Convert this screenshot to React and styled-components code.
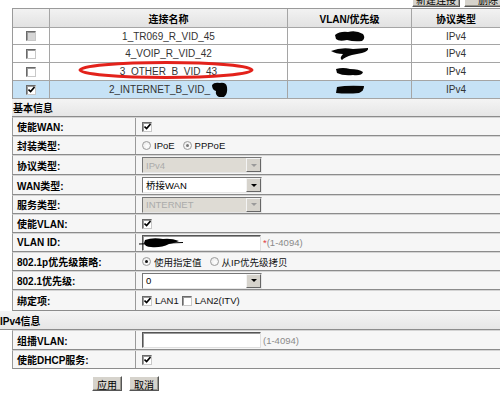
import styled, { createGlobalStyle } from "styled-components";

const GlobalStyle = createGlobalStyle`
  html, body { margin: 0; padding: 0; background: #fff; }
  body {
    font-family: "Liberation Sans", "Noto Sans CJK SC", sans-serif;
    font-size: 10px;
    color: #111;
  }
`;

const Page = styled.div`
  width: 500px;
  height: 396px;
  overflow: hidden;
  position: relative;
`;

const TopBar = styled.div`
  display: flex;
  justify-content: flex-end;
  gap: 4px;
  margin: -9px -12px 1px 0;
  height: 16px;
`;

const WinButton = styled.button`
  box-sizing: border-box;
  width: ${(p) => p.$w || 30}px;
  height: ${(p) => p.$h || 15}px;
  padding: 0;
  font-family: inherit;
  font-size: 10px;
  color: #000;
  background: #d6d3cc;
  border: 1px solid;
  border-color: #fff #555 #555 #fff;
  box-shadow: inset -1px -1px 0 #9a9890;
`;

const ConnTable = styled.div`
  margin-left: 12px;
  width: 489px;
  display: grid;
  grid-template-columns: 37px 238px 124px 1fr;
  grid-template-rows: 19px 17px 18px 18px 18px;
  border-top: 1px solid #9a9a9a;
  border-left: 1px solid #9a9a9a;
  box-sizing: border-box;
`;

const Cell = styled.div`
  display: flex;
  align-items: center;
  justify-content: center;
  gap: 1px;
  border-right: 1px solid #a5a5a5;
  border-bottom: 1px solid #a5a5a5;
  background: ${(p) => (p.$head ? "linear-gradient(#f2f2f2, #e2e2e2)" : p.$sel ? "#c6e2f6" : "#fff")};
  font-weight: ${(p) => (p.$head ? "bold" : "normal")};
  color: ${(p) => (p.$head ? "#000" : "#333")};
  overflow: hidden;
  white-space: nowrap;
`;

const Form = styled.div`
  margin-left: 12px;
  width: 489px;
`;

const Section = styled.div`
  height: ${(p) => p.$h}px;
  box-sizing: border-box;
  display: flex;
  align-items: center;
  margin-left: ${(p) => (p.$outdent ? -12 : 0)}px;
  padding-left: ${(p) => (p.$outdent ? 0 : 1)}px;
  font-weight: bold;
  color: #000;
  background: linear-gradient(#f4f4f4, #e6e6e6);
  border-bottom: 1px solid #8c8c8c;
`;

const Row = styled.div`
  height: ${(p) => p.$h}px;
  box-sizing: border-box;
  display: grid;
  grid-template-columns: 123px 1fr;
  background: #f6f6f6;
  border-left: 1px solid #9a9a9a;
  border-top: 1px solid #d4d4d4;
  border-bottom: 1px solid #8c8c8c;
`;

const Label = styled.div`
  display: flex;
  align-items: center;
  padding-left: 4px;
  font-weight: bold;
  color: #000;
  border-right: 1px solid #9a9a9a;
  white-space: nowrap;
`;

const Value = styled.div`
  display: flex;
  align-items: center;
  gap: 3px;
  padding-left: 6px;
  font-size: 9.5px;
  color: #111;
  white-space: nowrap;
`;

const Box = styled.span`
  box-sizing: border-box;
  width: 10px;
  height: 10px;
  display: inline-flex;
  align-items: center;
  justify-content: center;
  background: ${(p) => (p.$disabled ? "#d6d6d6" : "#fff")};
  border: 1px solid;
  border-color: #6a6a6a #c8c8c8 #c8c8c8 #6a6a6a;
  box-shadow: inset 1px 1px 0 #9a9a9a;
`;

const Check = ({ on, disabled }) => (
  <Box $disabled={disabled}>
    {on && (
      <svg width="7" height="7" viewBox="0 0 7 7">
        <path d="M0.5 3.5 L2.6 5.6 L6.5 1" stroke="#000" strokeWidth="1.6" fill="none" />
      </svg>
    )}
  </Box>
);

const RadioDot = styled.span`
  box-sizing: border-box;
  width: 9px;
  height: 9px;
  border-radius: 50%;
  display: inline-flex;
  align-items: center;
  justify-content: center;
  background: radial-gradient(circle at 60% 60%, #fff, #e4e4e4);
  border: 1px solid #9c9c9c;
  margin-left: ${(p) => (p.$gap ? 5 : 0)}px;
  &::after {
    content: "";
    width: 3px;
    height: 3px;
    border-radius: 50%;
    background: ${(p) => (p.$on ? (p.$dim ? "#777" : "#111") : "transparent")};
  }
`;

const SelectBox = styled.div`
  box-sizing: border-box;
  width: 120px;
  height: 16px;
  display: flex;
  align-items: center;
  justify-content: space-between;
  padding-left: 3px;
  border: 1px solid;
  border-color: #777 #e6e6e6 #e6e6e6 #777;
  background: ${(p) => (p.$disabled ? "#dedbd4" : "#fff")};
  color: ${(p) => (p.$disabled ? "#ababab" : "#000")};
  font-size: 9.5px;
`;

const Arrow = styled.span`
  box-sizing: border-box;
  width: 15px;
  height: 14px;
  display: flex;
  align-items: center;
  justify-content: center;
  background: #d6d3cc;
  border: 1px solid;
  border-color: #f4f4f4 #666 #666 #f4f4f4;
  &::after {
    content: "";
    border-left: 3px solid transparent;
    border-right: 3px solid transparent;
    border-top: 3px solid ${(p) => (p.$disabled ? "#9a9a9a" : "#000")};
  }
`;

const Select = ({ value, disabled }) => (
  <SelectBox $disabled={disabled}>
    {value}
    <Arrow $disabled={disabled} />
  </SelectBox>
);

const InputBox = styled.div`
  position: relative;
  box-sizing: border-box;
  width: 119px;
  height: 16px;
  background: #fff;
  border: 1px solid;
  border-color: #555 #e0e0e0 #e0e0e0 #555;
  box-shadow: inset 1px 1px 0 #999;
`;

const Hint = styled.span`
  color: #8a8a8a;
  font-size: 9.5px;
  margin-left: -1px;
  b {
    color: #e04040;
    font-weight: normal;
  }
`;

const Blot = styled.svg`
  position: absolute;
  left: -4px;
  top: 1px;
`;

const Ellipse = styled.svg`
  position: absolute;
  left: 77px;
  top: 59px;
`;

const Actions = styled.div`
  display: flex;
  gap: 7px;
  padding-left: 92px;
  margin-top: 7px;
`;

const Ink = ({ w, h, d }) => (
  <svg width={w} height={h} viewBox={`0 0 ${w} ${h}`}>
    <path d={d} fill="#050505" />
  </svg>
);

const conns = [
  { name: "1_TR069_R_VID_45", disabled: true, ink: { w: 32, h: 12, d: "M1 5 Q6 1 14 2 Q22 0 29 4 Q32 8 28 11 Q20 12 13 10 Q5 12 2 9 Z" } },
  { name: "4_VOIP_R_VID_42", ink: { w: 38, h: 13, d: "M0 4 Q10 0 22 2 L37 1 Q38 4 31 6 L21 8 Q14 10 11 13 Q8 11 12 7 Q5 7 0 4 Z" } },
  { name: "3_OTHER_B_VID_43", ink: { w: 29, h: 9, d: "M1 2 Q8 0 15 2 Q24 2 28 5 Q27 9 18 8 Q8 9 2 6 Z" } },
  { name: "2_INTERNET_B_VID_", sel: true, on: true, ink: { w: 30, h: 9, d: "M2 2 Q12 0 29 1 Q29 6 24 8 Q12 9 1 8 Z" } },
];

const rows = [
  { label: "使能WAN:", h: 19, v: <Check on /> },
  {
    label: "封装类型:",
    h: 19,
    v: (
      <>
        <RadioDot /> IPoE <RadioDot $on $dim $gap /> PPPoE
      </>
    ),
  },
  { label: "协议类型:", h: 20, v: <Select value="IPv4" disabled /> },
  { label: "WAN类型:", h: 20, v: <Select value="桥接WAN" /> },
  { label: "服务类型:", h: 19, v: <Select value="INTERNET" disabled /> },
  { label: "使能VLAN:", h: 19, v: <Check on /> },
  {
    label: "VLAN ID:",
    h: 19,
    v: (
      <>
        <InputBox>
          <Blot width="46" height="12" viewBox="0 0 46 12">
            <path d="M0 7 L44 5.5" stroke="#000" strokeWidth="1" />
            <path d="M6 3 Q14 0 24 2 Q32 1 40 4 Q36 6 30 7 Q22 11 12 10 Q6 10 5 6 Z" fill="#000" />
          </Blot>
        </InputBox>
        <Hint>
          <b>*</b>(1-4094)
        </Hint>
      </>
    ),
  },
  {
    label: "802.1p优先级策略:",
    h: 19,
    v: (
      <>
        <RadioDot $on /> 使用指定值 <RadioDot $gap /> 从IP优先级拷贝
      </>
    ),
  },
  { label: "802.1优先级:", h: 19, v: <Select value="0" /> },
  {
    label: "绑定项:",
    h: 21,
    v: (
      <>
        <Check on /> LAN1 <Check /> LAN2(ITV)
      </>
    ),
  },
];

export default function App() {
  return (
    <Page>
      <GlobalStyle />
      <TopBar>
        <WinButton $w={48} $h={16}>新建连接</WinButton>
        <WinButton $w={48} $h={16}>删除</WinButton>
      </TopBar>

      <ConnTable>
        <Cell $head />
        <Cell $head>连接名称</Cell>
        <Cell $head>VLAN/优先级</Cell>
        <Cell $head>协议类型</Cell>
        {conns.map((c) => (
          <>
            <Cell key={c.name + "a"} $sel={c.sel}>
              <Check on={c.on} disabled={c.disabled} />
            </Cell>
            <Cell key={c.name + "b"} $sel={c.sel}>
              {c.name}
              {c.sel && <Ink w={17} h={15} d="M1 3 Q3 0 9 1 Q15 0 16 5 Q17 12 13 15 L8 15 Q4 13 5 9 Q1 8 1 3 Z" />}
            </Cell>
            <Cell key={c.name + "c"} $sel={c.sel}>
              <Ink {...c.ink} />
            </Cell>
            <Cell key={c.name + "d"} $sel={c.sel}>
              IPv4
            </Cell>
          </>
        ))}
      </ConnTable>

      <Form>
        <Section $h={18}>基本信息</Section>
        {rows.map((r) => (
          <Row key={r.label} $h={r.h}>
            <Label>{r.label}</Label>
            <Value>{r.v}</Value>
          </Row>
        ))}
        <Section $h={19} $outdent>
          IPv4信息
        </Section>
        <Row $h={20}>
          <Label>组播VLAN:</Label>
          <Value>
            <InputBox />
            <Hint>(1-4094)</Hint>
          </Value>
        </Row>
        <Row $h={19}>
          <Label>使能DHCP服务:</Label>
          <Value>
            <Check on />
          </Value>
        </Row>
      </Form>

      <Actions>
        <WinButton>应用</WinButton>
        <WinButton>取消</WinButton>
      </Actions>

      <Ellipse width="180" height="22" viewBox="0 0 180 22">
        <ellipse cx="89" cy="11" rx="86" ry="7.5" fill="none" stroke="#e3221b" strokeWidth="3" />
      </Ellipse>
    </Page>
  );
}
